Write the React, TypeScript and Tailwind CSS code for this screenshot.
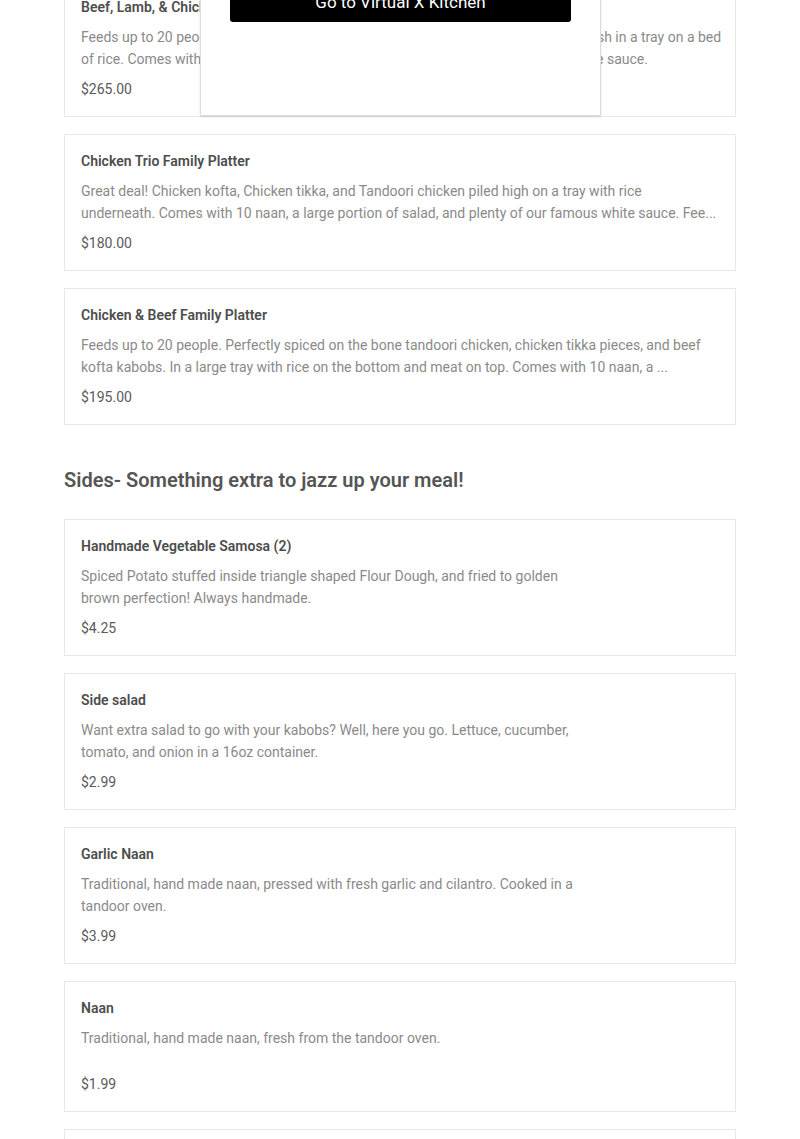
import React from "react";

type Item = {
  name: string;
  desc: string;
  price: string;
  pre?: boolean;
};

const platters: Item[] = [
  {
    name: "Beef, Lamb, & Chicken Family Platter",
    desc: "Feeds up to 20 people. Beef kofta, lamb chops, and chicken tikka kabobs served fresh in a tray on a bed\nof rice. Comes with 10 naan, a large portion of salad, and plenty of our famous white sauce.",
    price: "$265.00",
    pre: true,
  },
  {
    name: "Chicken Trio Family Platter",
    desc: "Great deal! Chicken kofta, Chicken tikka, and Tandoori chicken piled high on a tray with rice underneath. Comes with 10 naan, a large portion of salad, and plenty of our famous white sauce. Fee...",
    price: "$180.00",
  },
  {
    name: "Chicken & Beef Family Platter",
    desc: "Feeds up to 20 people. Perfectly spiced on the bone tandoori chicken, chicken tikka pieces, and beef kofta kabobs. In a large tray with rice on the bottom and meat on top. Comes with 10 naan, a ...",
    price: "$195.00",
  },
];

const sides: Item[] = [
  {
    name: "Handmade Vegetable Samosa (2)",
    desc: "Spiced Potato stuffed inside triangle shaped Flour Dough, and fried to golden brown perfection! Always handmade.",
    price: "$4.25",
  },
  {
    name: "Side salad",
    desc: "Want extra salad to go with your kabobs? Well, here you go. Lettuce, cucumber, tomato, and onion in a 16oz container.",
    price: "$2.99",
  },
  {
    name: "Garlic Naan",
    desc: "Traditional, hand made naan, pressed with fresh garlic and cilantro. Cooked in a tandoor oven.",
    price: "$3.99",
  },
  {
    name: "Naan",
    desc: "Traditional, hand made naan, fresh from the tandoor oven.",
    price: "$1.99",
  },
  {
    name: "Mango Lassi",
    desc: "Sweet and creamy mango yogurt drink.",
    price: "$3.50",
  },
];

const MenuCard = ({ item, narrow }: { item: Item; narrow?: boolean }) => {
  return (
    <div className="overflow-hidden border border-[#e8e8e8] bg-white px-4 pt-4 pb-[17px]">
      <div className="text-[14px] leading-[20px] font-semibold text-[#4d4d4d]">
        {item.name}
      </div>
      <div
        className={`mt-[9px] min-h-[38px] text-[14px] leading-[22px] text-[#8a8a8a] ${
          item.pre ? "whitespace-pre" : ""
        } ${narrow ? "max-w-[510px]" : ""}`}
      >
        {item.desc}
      </div>
      <div className="mt-[9px] text-[14px] leading-[20px] text-[#5a5a5a]">
        {item.price}
      </div>
    </div>
  );
};

export default function App() {
  return (
    <div
      className="relative h-[1139px] overflow-hidden bg-white"
      style={{ fontFamily: "Roboto, 'Liberation Sans', sans-serif" }}
    >
      <div className="-mt-[20px] px-16">
        <div className="flex flex-col gap-[17px]">
          {platters.map((p) => (
            <MenuCard key={p.name} item={p} />
          ))}
        </div>

        <h2 className="mt-[41px] text-[20px] leading-[28px] font-semibold text-[#555555]">
          Sides- Something extra to jazz up your meal!
        </h2>

        <div className="mt-[25px] flex flex-col gap-[17px]">
          {sides.map((s) => (
            <MenuCard key={s.name} item={s} narrow />
          ))}
        </div>
      </div>

      {/* store redirect modal, scrolled mostly out of view */}
      <div className="absolute top-[-100px] left-[200px] h-[216px] w-[401px] border border-[#dcdcdc] bg-white px-[29px] pt-[73px] shadow-[0_1px_2px_rgba(0,0,0,0.12)]">
        <button className="flex h-[48px] w-full items-center justify-center rounded-[3px] bg-black pt-[10px] text-[17px] text-white">
          Go to Virtual X Kitchen
        </button>
      </div>
    </div>
  );
}
